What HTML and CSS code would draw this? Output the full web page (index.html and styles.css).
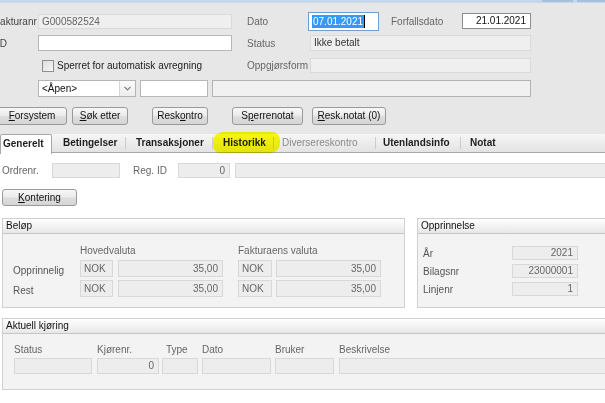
FILE: index.html
```html
<!DOCTYPE html>
<html lang="no">
<head>
<meta charset="utf-8">
<title>Faktura</title>
<link rel="stylesheet" href="styles.css">
</head>
<body>
<div class="titlebar"><span class="tb-btn"></span><span class="tb-btn tb-btn-last"></span></div>
<div class="head">
  <div class="row">
    <div class="lbl0">Fakturanr</div>
    <div class="field ro f-main h15">G000582524</div>
    <div class="lbl lbl-dato">Dato</div>
    <div class="date"><span class="sel">07.01.2021</span><span class="caret"></span></div>
    <div class="lbl lbl-forf">Forfallsdato</div>
    <div class="field edit num f-forf">21.01.2021</div>
  </div>
  <div class="row">
    <div class="lbl0 lbl0-id">ID</div>
    <div class="field white f-main h16"></div>
    <div class="lbl lbl-col2">Status</div>
    <div class="field ro status f-wide h16">Ikke betalt</div>
  </div>
  <div class="row r3">
    <div class="spacer38"></div>
    <div class="checkwrap"><span class="checkbox"></span><span class="checklbl">Sperret for automatisk avregning</span></div>
    <div class="lbl lbl-col2 no-gap">Oppgjørsform</div>
    <div class="field ro f-wide h15"></div>
  </div>
  <div class="row">
    <div class="spacer38"></div>
    <div class="select"><span class="select-text">&lt;Åpen&gt;</span><span class="select-btn"><svg width="7" height="5" viewBox="0 0 7 5"><polyline points="0.5,0.8 3.5,3.8 6.5,0.8" fill="none" stroke="#7d7d7d" stroke-width="1.2"/></svg></span></div>
    <div class="field white f-small h17"></div>
    <div class="field light f-long h17"></div>
  </div>
  <div class="btnrow">
    <div class="btn b1"><u>F</u>orsystem</div>
    <div class="btn b2"><u>S</u>øk etter</div>
    <div class="btn b3">Resk<u>o</u>ntro</div>
    <div class="btn b4">S<u>p</u>errenotat</div>
    <div class="btn b5"><u>R</u>esk.notat (0)</div>
  </div>
</div>
<div class="tabs">
  <div class="tab active t1">Generelt</div>
  <div class="tab t2">Betingelser</div>
  <span class="sep"></span>
  <div class="tab t3">Transaksjoner</div>
  <span class="sep"></span>
  <div class="tab t4">Historikk<span class="marker"></span></div>
  <span class="sep"></span>
  <div class="tab disabled t5">Diversereskontro</div>
  <span class="sep"></span>
  <div class="tab t6">Utenlandsinfo</div>
  <span class="sep"></span>
  <div class="tab t7">Notat</div>
</div>
<div class="content">
  <div class="orow">
    <div class="olbl o1">Ordrenr.</div>
    <div class="field ro f-ordre h15"></div>
    <div class="olbl o2">Reg. ID</div>
    <div class="field ro num f-reg h15">0</div>
    <div class="field ro f-regtext h15"></div>
  </div>
  <div class="btn kont"><u>K</u>ontering</div>
  <div class="groups">
    <div class="box box-belop">
      <div class="box-head">Beløp</div>
      <div class="belop-body">
        <div class="bhead"><span class="bh-sp"></span><span class="bh1">Hovedvaluta</span><span>Fakturaens valuta</span></div>
        <div class="brow">
          <div class="blbl">Opprinnelig</div>
          <div class="field ro f-cur h17">NOK</div>
          <div class="field ro num f-amt h17 g5">35,00</div>
          <div class="field ro f-cur2 h17 g15">NOK</div>
          <div class="field ro num f-amt h17 g4">35,00</div>
        </div>
        <div class="brow">
          <div class="blbl">Rest</div>
          <div class="field ro f-cur h17">NOK</div>
          <div class="field ro num f-amt h17 g5">35,00</div>
          <div class="field ro f-cur2 h17 g15">NOK</div>
          <div class="field ro num f-amt h17 g4">35,00</div>
        </div>
      </div>
    </div>
    <div class="box box-opp">
      <div class="box-head">Opprinnelse</div>
      <div class="opp-body">
        <div class="orow2"><div class="oplbl">År</div><div class="field ro num f-opp h14">2021</div></div>
        <div class="orow2"><div class="oplbl">Bilagsnr</div><div class="field ro num f-opp h14">23000001</div></div>
        <div class="orow2"><div class="oplbl">Linjenr</div><div class="field ro num f-opp h14">1</div></div>
      </div>
    </div>
  </div>
  <div class="box box-akt">
    <div class="box-head">Aktuell kjøring</div>
    <div class="akt-body">
      <div class="acol c1"><div class="alb">Status</div><div class="field ro h16"></div></div>
      <div class="acol c2"><div class="alb">Kjørenr.</div><div class="field ro num h16">0</div></div>
      <div class="acol c3"><div class="alb alb-type">Type</div><div class="field ro h16"></div></div>
      <div class="acol c4"><div class="alb">Dato</div><div class="field ro h16"></div></div>
      <div class="acol c5"><div class="alb">Bruker</div><div class="field ro h16"></div></div>
      <div class="acol c6"><div class="alb">Beskrivelse</div><div class="field ro h16"></div></div>
    </div>
  </div>
</div>
</body>
</html>
```

FILE: styles.css
```css
* { box-sizing: border-box; }
html, body { margin: 0; padding: 0; }
body {
  width: 605px;
  height: 403px;
  overflow: hidden;
  background: #ffffff;
  font-family: "Liberation Sans", Arial, sans-serif;
  font-size: 10px;
  color: #333;
}

/* window strip */
.titlebar { height: 3px; background: #c6d8ec; display: flex; justify-content: flex-end; gap: 4px; }
.tb-btn { width: 31px; height: 2px; background: #a9c0db; }
.tb-btn-last { width: 28px; }

/* header area */
.head { background: #e7e7e7; padding: 7px 0 9px; }
.row { display: flex; align-items: center; height: 22px; }
.r3 { height: 23px; }
.lbl0 { flex: none; width: 44px; margin-left: -6px; color: #444; }
.lbl0-id { padding-left: 3px; }
.lbl { flex: none; color: #666; white-space: nowrap; }
.lbl-dato { width: 61px; margin-left: 15px; }
.lbl-forf { width: 71px; margin-left: 12px; }
.lbl-col2 { width: 63px; margin-left: 15px; }
.lbl-col2.no-gap { margin-left: 0; }
.spacer38 { flex: none; width: 38px; }

.field {
  flex: none;
  border: 1px solid #d8d8d8;
  background: #ededed;
  color: #666;
  padding: 0 3px;
  white-space: nowrap;
  overflow: hidden;
}
.field.ro { background: #ededed; }
.head .field.ro { background: #efefef; border-color: #dadada; }
.field.white { background: #fff; border-color: #b7b7b7; }
.field.light { background: #f1f1f1; border-color: #b3b3b3; }
.field.edit { background: #fff; border-color: #8c8c8c; color: #111; }
.field.status { color: #333; }
.num { text-align: right; padding-right: 4px; }

.h14 { height: 14px; line-height: 12px; }
.h15 { height: 15px; line-height: 13px; }
.h16 { height: 16px; line-height: 14px; }
.h17 { height: 17px; line-height: 15px; }

.f-main { width: 194px; }
.f-forf { width: 69px; height: 16px; line-height: 14px; }
.f-wide { width: 221px; }
.f-small { width: 68px; margin-left: 4px; }
.f-long { width: 319px; margin-left: 4px; }

.date {
  flex: none;
  width: 71px;
  height: 19px;
  border: 1px solid #6d9fd2;
  background: #fff;
  padding: 2px 0 0 3px;
  display: flex;
  align-items: flex-start;
}
.sel { background: #3399ff; color: #fff; height: 13px; line-height: 13px; padding: 0 1px; }
.caret { width: 1px; height: 13px; background: #000; }

.checkwrap { flex: none; width: 209px; display: flex; align-items: center; }
.checkbox {
  width: 12px; height: 12px; margin-left: 4px;
  border: 1px solid #8e8e8e;
  background: linear-gradient(135deg, #dcdcdc, #f7f7f7);
}
.checklbl { margin-left: 3px; color: #222; }

.select {
  flex: none;
  width: 98px; height: 17px;
  border: 1px solid #b4b4b4;
  background: #fff;
  display: flex;
}
.select-text { flex: 1; padding-left: 3px; line-height: 15px; color: #111; }
.select-btn {
  width: 16px;
  border-left: 1px solid #d7d7d7;
  background: linear-gradient(#fbfbfb, #ececec);
  display: flex; align-items: center; justify-content: center;
}

/* buttons */
.btnrow { display: flex; margin-top: 8px; height: 18px; }
.btn {
  flex: none;
  height: 18px;
  border: 1px solid #9a9a9a;
  border-radius: 3px;
  background: linear-gradient(#f7f7f7, #ececec 45%, #dddddd 55%, #d5d5d5);
  color: #111;
  text-align: center;
  line-height: 16px;
  white-space: nowrap;
}
.b1 { width: 70px; margin-left: -3px; }
.b2 { width: 56px; margin-left: 5px; }
.b3 { width: 56px; margin-left: 24px; }
.b4 { width: 71px; margin-left: 24px; }
.b5 { width: 74px; margin-left: 9px; }

/* tabs */
.tabs {
  display: flex;
  align-items: stretch;
  height: 19px;
  background: linear-gradient(#f6f6f6, #e3e3e3);
  border-bottom: 1px solid #a8a8a8;
}
.tab {
  flex: none;
  font-weight: bold;
  color: #1e1e1e;
  line-height: 18px;
  white-space: nowrap;
  position: relative;
}
.tab.active {
  background: #fff;
  border: 1px solid #a8a8a8;
  border-bottom: none;
  border-radius: 2px 2px 0 0;
  margin-bottom: -1px;
  height: 20px;
}
.tab.disabled { font-weight: normal; color: #8a8a8a; }
.sep { flex: none; width: 1px; height: 12px; align-self: center; background: #cdcdcd; }
.t1 { width: 52px; padding-left: 2px; }
.t2 { width: 73px; padding-left: 11px; }
.t3 { width: 86px; padding-left: 10px; }
.t4 { width: 60px; padding-left: 10px; }
.t5 { width: 101px; padding-left: 8px; }
.t6 { width: 84px; padding-left: 7px; }
.t7 { padding-left: 9px; }
.marker {
  position: absolute;
  left: 0; top: -2px;
  width: 67px; height: 21px;
  background: #ffff10;
  border-radius: 10px 8px 9px 7px / 9px 8px 10px 8px;
  mix-blend-mode: multiply;
}

/* content */
.content { padding-top: 10px; }
.orow { display: flex; align-items: center; height: 15px; }
.olbl { flex: none; color: #666; }
.o1 { width: 50px; margin-left: 2px; }
.o2 { width: 45px; margin-left: 13px; }
.f-ordre { width: 68px; }
.f-reg { width: 52px; }
.f-regtext { width: 375px; margin-left: 5px; }
.kont { width: 75px; height: 17px; line-height: 15px; margin: 11px 0 0 2px; }

.groups { display: flex; gap: 12px; margin: 12px 0 0 2px; }
.box { flex: none; border: 1px solid #d0d0d0; background: #f3f3f3; }
.box-head {
  height: 15px;
  line-height: 14px;
  padding-left: 3px;
  background: linear-gradient(#ffffff, #e7e7e7);
  border-bottom: 1px solid #c6c6c6;
  color: #111;
}
.box-belop { width: 403px; height: 90px; }
.box-opp { width: 190px; height: 90px; }

.belop-body { padding: 11px 0 0 10px; }
.bhead { display: flex; height: 12px; line-height: 12px; color: #666; }
.bh-sp { width: 67px; }
.bh1 { width: 158px; }
.brow { display: flex; margin-top: 3px; }
.blbl { flex: none; width: 67px; padding-top: 4px; color: #555; line-height: 13px; }
.f-cur { width: 33px; }
.f-cur2 { width: 34px; }
.f-amt { width: 105px; }
.g5 { margin-left: 5px; }
.g15 { margin-left: 15px; }
.g4 { margin-left: 4px; }

.opp-body { padding: 12px 0 0 5px; }
.orow2 { display: flex; align-items: center; height: 14px; margin-bottom: 4px; }
.oplbl { flex: none; width: 89px; color: #555; }
.f-opp { width: 66px; }

.box-akt { width: 610px; height: 72px; margin: 10px 0 0 2px; }
.akt-body { display: flex; padding: 10px 0 0 11px; }
.acol { flex: none; display: flex; flex-direction: column; }
.alb { height: 12px; line-height: 12px; margin-bottom: 2px; color: #666; }
.alb-type { padding-left: 4px; }
.c1 { width: 78px; }
.c2 { width: 62px; margin-left: 5px; }
.c3 { width: 36px; margin-left: 3px; }
.c4 { width: 69px; margin-left: 4px; }
.c5 { width: 59px; margin-left: 4px; }
.c6 { width: 280px; margin-left: 5px; }
```
